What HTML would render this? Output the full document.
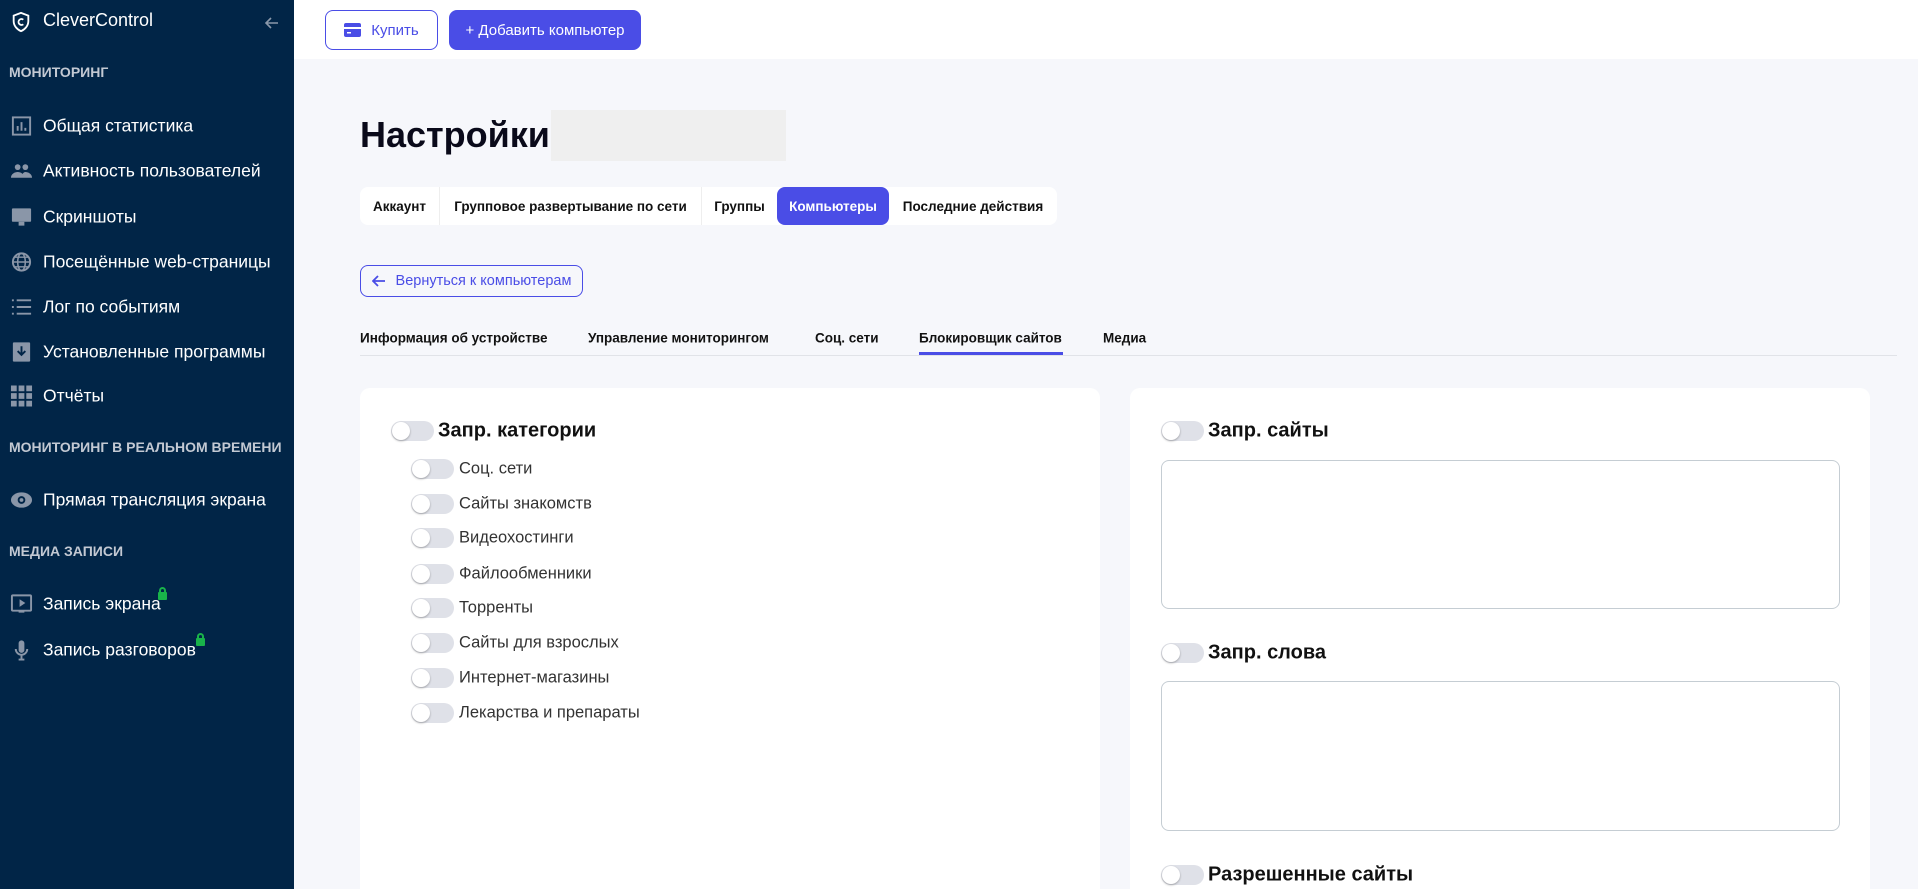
<!DOCTYPE html>
<html><head><meta charset="utf-8">
<style>
*{box-sizing:border-box;margin:0;padding:0}
html,body{width:1918px;height:889px;overflow:hidden}
body{background:#f6f7fb;font-family:"Liberation Sans",sans-serif;position:relative;color:#111}
.abs{position:absolute}
.sb{left:0;top:0;width:294px;height:889px;background:#012547;color:#fff}
.sec{position:absolute;left:9px;font-size:14px;font-weight:bold;color:#c3c9d3;white-space:nowrap}
.mi{position:absolute;left:43px;font-size:17.5px;color:#fff;white-space:nowrap;transform:translateY(-50%)}
.ic{position:absolute;left:10px;width:23px;height:23px;transform:translateY(-50%)}
.top{left:294px;top:0;width:1624px;height:59px;background:#fff}
.btn{position:absolute;border-radius:8px;font-size:15px;display:flex;align-items:center;justify-content:center}
.tabs{left:360px;top:187px;height:38px;width:697px;background:#fff;border-radius:8px;display:flex;font-size:13.5px;font-weight:bold}
.tabs div{display:flex;align-items:center;justify-content:center;height:38px;white-space:nowrap}
.st{position:absolute;top:338px;font-size:13.5px;font-weight:bold;transform:translateY(-50%);white-space:nowrap;color:#111}
.card{background:#fff;border-radius:10px}
.tg{position:absolute;width:43px;height:20px;border-radius:10px;background:#dfe1e8;transform:translateY(-50%)}
.tg:after{content:"";position:absolute;left:1px;top:1px;width:18px;height:18px;border-radius:50%;background:#fff;box-shadow:0 1px 2px rgba(0,0,0,.3)}
.lb{position:absolute;font-size:16.5px;color:#333;transform:translateY(-50%);white-space:nowrap}
.h{position:absolute;font-size:20px;font-weight:bold;transform:translateY(-50%);white-space:nowrap}
.ta{position:absolute;left:1161px;width:679px;border:1px solid #c5cdd3;border-radius:8px;background:#fff}
.lock{position:absolute;width:9px;height:8px;background:#19b34a;border-radius:1px}
.lock:before{content:"";position:absolute;left:1px;top:-5px;width:7px;height:7px;border:2px solid #19b34a;border-bottom:none;border-radius:4px 4px 0 0;box-sizing:border-box}
</style></head><body>
<div class="abs sb">
  <svg class="abs" style="left:10px;top:11px" width="22" height="22" viewBox="0 0 24 24"><path d="M12 2l8 3v6c0 5-3.5 9-8 11-4.5-2-8-6-8-11V5z" fill="none" stroke="#fff" stroke-width="2"/><path d="M14.5 9.5a3.2 3.2 0 1 0 0 5" fill="none" stroke="#fff" stroke-width="2"/></svg>
  <div class="abs" style="left:43px;top:10px;font-size:18px;color:#fff">CleverControl</div>
  <svg class="abs" style="left:264px;top:15px" width="16" height="16" viewBox="0 0 16 16"><path d="M14 8H2M7 3L2 8l5 5" fill="none" stroke="#8a98aa" stroke-width="1.6"/></svg>
  <div class="sec" style="top:64px">МОНИТОРИНГ</div>
  <svg class="ic" style="top:126px" viewBox="0 0 24 24"><rect x="3" y="3" width="18" height="18" fill="none" stroke="#8a96a8" stroke-width="2"/><path d="M8 17v-5M12 17V8M16 17v-3" stroke="#8a96a8" stroke-width="2"/></svg>
  <div class="mi" style="top:126px">Общая статистика</div>
  <svg class="ic" style="top:171px" viewBox="0 0 24 24"><circle cx="8" cy="8" r="3" fill="#8a96a8"/><circle cx="16" cy="8" r="3" fill="#8a96a8"/><path d="M1 19c0-4 4-6 7-6s7 2 7 6zM12 19c0-3 2-6 4-6 3 0 7 2 7 6z" fill="#8a96a8"/></svg>
  <div class="mi" style="top:171px">Активность пользователей</div>
  <svg class="ic" style="top:217px" viewBox="0 0 24 24"><rect x="2" y="3" width="20" height="14" rx="1" fill="#8a96a8"/><rect x="9" y="17" width="6" height="4" fill="#8a96a8"/></svg>
  <div class="mi" style="top:217px">Скриншоты</div>
  <svg class="ic" style="top:262px" viewBox="0 0 24 24"><circle cx="12" cy="12" r="9" fill="none" stroke="#8a96a8" stroke-width="2"/><ellipse cx="12" cy="12" rx="4" ry="9" fill="none" stroke="#8a96a8" stroke-width="1.6"/><path d="M3 12h18M5 7h14M5 17h14" stroke="#8a96a8" stroke-width="1.5"/></svg>
  <div class="mi" style="top:262px">Посещённые web-страницы</div>
  <svg class="ic" style="top:307px" viewBox="0 0 24 24"><path d="M2 5h2M2 12h2M2 19h2M7 5h15M7 12h15M7 19h15" stroke="#8a96a8" stroke-width="2"/></svg>
  <div class="mi" style="top:307px">Лог по событиям</div>
  <svg class="ic" style="top:352px" viewBox="0 0 24 24"><rect x="3" y="2" width="18" height="20" rx="1" fill="#8a96a8"/><path d="M12 6v8M8 11l4 4 4-4" stroke="#012547" stroke-width="2" fill="none"/></svg>
  <div class="mi" style="top:352px">Установленные программы</div>
  <svg class="ic" style="top:396px" viewBox="0 0 24 24"><path d="M1 1h6v6H1zM9 1h6v6H9zM17 1h6v6h-6zM1 9h6v6H1zM9 9h6v6H9zM17 9h6v6h-6zM1 17h6v6H1zM9 17h6v6H9zM17 17h6v6h-6z" fill="#8a96a8"/></svg>
  <div class="mi" style="top:396px">Отчёты</div>
  <div class="sec" style="top:439px">МОНИТОРИНГ В РЕАЛЬНОМ ВРЕМЕНИ</div>
  <svg class="ic" style="top:500px" viewBox="0 0 24 24"><ellipse cx="12" cy="12" rx="11" ry="8" fill="#8a96a8"/><circle cx="12" cy="12" r="4" fill="#012547"/><circle cx="12" cy="12" r="2" fill="#8a96a8"/></svg>
  <div class="mi" style="top:500px">Прямая трансляция экрана</div>
  <div class="sec" style="top:543px">МЕДИА ЗАПИСИ</div>
  <svg class="ic" style="top:604px" viewBox="0 0 24 24"><rect x="2" y="3" width="20" height="16" rx="1" fill="none" stroke="#8a96a8" stroke-width="2"/><path d="M10 7v8l6-4z" fill="#8a96a8"/><rect x="9" y="19" width="6" height="2" fill="#8a96a8"/></svg>
  <div class="mi" style="top:604px">Запись экрана</div>
  <div class="lock" style="left:158px;top:592px"></div>
  <svg class="ic" style="top:650px" viewBox="0 0 24 24"><rect x="9" y="2" width="6" height="13" rx="3" fill="#8a96a8"/><path d="M6 11a6 6 0 0 0 12 0M12 17v5M9 22h6" fill="none" stroke="#8a96a8" stroke-width="2"/></svg>
  <div class="mi" style="top:650px">Запись разговоров</div>
  <div class="lock" style="left:196px;top:638px"></div>
</div>
<div class="abs top">
  <div class="btn" style="left:31px;top:10px;width:113px;height:40px;border:1.5px solid #4a4de6;color:#4a4de6">
    <svg width="17" height="14" viewBox="0 0 17 14" style="margin-right:10px"><rect x="0" y="0" width="17" height="14" rx="2" fill="#4a4de6"/><rect x="0" y="4" width="17" height="2" fill="#fff"/><rect x="3" y="9" width="4" height="1.5" fill="#fff"/></svg>Купить</div>
  <div class="btn" style="left:155px;top:10px;width:192px;height:40px;background:#4a4de6;color:#fff">+ Добавить компьютер</div>
</div>
<div class="abs" style="left:360px;top:114px;font-size:36px;font-weight:bold;color:#0a0a1a">Настройки</div>
<div class="abs" style="left:551px;top:110px;width:235px;height:51px;background:#efefef"></div>
<div class="abs tabs">
  <div style="width:80px;border-right:1px solid #eee">Аккаунт</div>
  <div style="width:262px;border-right:1px solid #eee">Групповое развертывание по сети</div>
  <div style="width:75px">Группы</div>
  <div style="width:112px;background:#4a4de6;color:#fff;border-radius:8px">Компьютеры</div>
  <div style="width:168px">Последние действия</div>
</div>
<div class="btn" style="left:360px;top:265px;width:223px;height:32px;border:1.5px solid #4a4de6;color:#4a4de6;font-size:14.5px">
  <svg width="14" height="12" viewBox="0 0 14 12" style="margin-right:10px"><path d="M13 6H2M6 1L1 6l5 5" fill="none" stroke="#4a4de6" stroke-width="1.8"/></svg>Вернуться к компьютерам</div>
<div class="st" style="left:360px">Информация об устройстве</div>
<div class="st" style="left:588px">Управление мониторингом</div>
<div class="st" style="left:815px">Соц. сети</div>
<div class="st" style="left:919px">Блокировщик сайтов</div>
<div class="st" style="left:1103px">Медиа</div>
<div class="abs" style="left:360px;top:355px;width:1537px;height:1px;background:#e1e3e8"></div>
<div class="abs" style="left:919px;top:352px;width:144px;height:3px;background:#4a4de6"></div>
<div class="abs card" style="left:360px;top:388px;width:740px;height:520px"></div>
<div class="abs card" style="left:1130px;top:388px;width:740px;height:520px"></div>
<div class="tg" style="left:391px;top:431px"></div><div class="h" style="left:438px;top:431px">Запр. категории</div>
<div class="tg" style="left:411px;top:469px"></div><div class="lb" style="left:459px;top:469px">Соц. сети</div>
<div class="tg" style="left:411px;top:504px"></div><div class="lb" style="left:459px;top:504px">Сайты знакомств</div>
<div class="tg" style="left:411px;top:538px"></div><div class="lb" style="left:459px;top:538px">Видеохостинги</div>
<div class="tg" style="left:411px;top:574px"></div><div class="lb" style="left:459px;top:574px">Файлообменники</div>
<div class="tg" style="left:411px;top:608px"></div><div class="lb" style="left:459px;top:608px">Торренты</div>
<div class="tg" style="left:411px;top:643px"></div><div class="lb" style="left:459px;top:643px">Сайты для взрослых</div>
<div class="tg" style="left:411px;top:678px"></div><div class="lb" style="left:459px;top:678px">Интернет-магазины</div>
<div class="tg" style="left:411px;top:713px"></div><div class="lb" style="left:459px;top:713px">Лекарства и препараты</div>
<div class="tg" style="left:1161px;top:431px"></div><div class="h" style="left:1208px;top:431px">Запр. сайты</div>
<div class="ta" style="top:460px;height:149px"></div>
<div class="tg" style="left:1161px;top:653px"></div><div class="h" style="left:1208px;top:653px">Запр. слова</div>
<div class="ta" style="top:681px;height:150px"></div>
<div class="tg" style="left:1161px;top:875px"></div><div class="h" style="left:1208px;top:875px">Разрешенные сайты</div>
</body></html>
